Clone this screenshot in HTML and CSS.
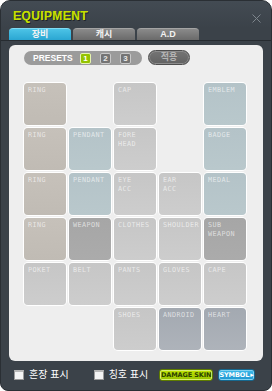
FILE: index.html
```html
<!DOCTYPE html>
<html>
<head>
<meta charset="utf-8">
<link rel="stylesheet" href="styles.css">
</head>
<body>
<div class="window">
  <div class="header">
    <span class="title">EQUIPMENT</span>
    <svg class="close" width="9" height="9" viewBox="0 0 9 9"><path d="M0.5 0.5L8.5 8.5M8.5 0.5L0.5 8.5" stroke="#7d858c" stroke-width="1"/></svg>
  </div>
  <div class="tabs">
    <div class="tab active">장비</div>
    <div class="tab">캐시</div>
    <div class="tab latin">A.D</div>
  </div>
  <div class="panel">
    <div class="presets-row">
      <div class="presets">
        <span class="presets-label">PRESETS</span>
        <span class="num on">1</span>
        <span class="num">2</span>
        <span class="num">3</span>
      </div>
      <div class="apply">적용</div>
    </div>
    <div class="grid">
      <div class="cell ring"><span>RING</span></div>
      <div class="cell empty"></div>
      <div class="cell gray"><span>CAP</span></div>
      <div class="cell empty"></div>
      <div class="cell blue"><span>EMBLEM</span></div>

      <div class="cell ring"><span>RING</span></div>
      <div class="cell blue"><span>PENDANT</span></div>
      <div class="cell gray"><span>FORE<br>HEAD</span></div>
      <div class="cell empty"></div>
      <div class="cell blue"><span>BADGE</span></div>

      <div class="cell ring"><span>RING</span></div>
      <div class="cell blue"><span>PENDANT</span></div>
      <div class="cell gray"><span>EYE<br>ACC</span></div>
      <div class="cell gray"><span>EAR<br>ACC</span></div>
      <div class="cell blue"><span>MEDAL</span></div>

      <div class="cell ring"><span>RING</span></div>
      <div class="cell dark"><span>WEAPON</span></div>
      <div class="cell gray"><span>CLOTHES</span></div>
      <div class="cell gray"><span>SHOULDER</span></div>
      <div class="cell dark"><span>SUB<br>WEAPON</span></div>

      <div class="cell gray"><span>POKET</span></div>
      <div class="cell gray"><span>BELT</span></div>
      <div class="cell gray"><span>PANTS</span></div>
      <div class="cell gray"><span>GLOVES</span></div>
      <div class="cell gray"><span>CAPE</span></div>

      <div class="cell empty"></div>
      <div class="cell empty"></div>
      <div class="cell gray"><span>SHOES</span></div>
      <div class="cell slate"><span>ANDROID</span></div>
      <div class="cell slate"><span>HEART</span></div>
    </div>
  </div>
  <div class="footer">
    <label class="check"><span class="box"></span><span class="check-text">혼장 표시</span></label>
    <label class="check"><span class="box"></span><span class="check-text">칭호 표시</span></label>
    <div class="btn dmg">DAMAGE SKIN</div>
    <div class="btn sym">SYMBOL<span class="tri">&#9656;</span></div>
  </div>
</div>
</body>
</html>
```

FILE: styles.css
```css
html, body {
  margin: 0;
  padding: 0;
  background: #ffffff;
}
.window {
  box-sizing: border-box;
  width: 272px;
  height: 391px;
  border: 1px solid #2a2f34;
  border-radius: 10px 10px 8px 8px;
  background: #3b4249;
  display: flex;
  flex-direction: column;
  font-family: "Liberation Sans", "Noto Sans CJK KR", sans-serif;
  overflow: hidden;
}
.header {
  height: 27px;
  box-sizing: border-box;
  padding: 9px 10px 0 12px;
  display: flex;
  justify-content: space-between;
  align-items: flex-start;
  background: linear-gradient(#434b53, #3b4249);
}
.title {
  font-size: 12px;
  line-height: 12px;
  font-weight: bold;
  color: #c6e000;
  letter-spacing: 0.4px;
  text-shadow: 1px 1px 0 #1e2328, 0.4px 0 0 #c6e000;
}
.close {
  margin-top: 4px;
}
.tabs {
  height: 13px;
  box-sizing: border-box;
  padding-left: 8px;
  display: flex;
  align-items: flex-end;
  gap: 2px;
  border-bottom: 1px solid #262b30;
}
.tab {
  width: 62px;
  height: 12px;
  box-sizing: border-box;
  border-radius: 4px 4px 0 0;
  background: linear-gradient(#8a8a8a, #6a6a6a);
  border-top: 1px solid #a4a4a4;
  color: #f2f2f2;
  font-size: 9px;
  line-height: 11px;
  text-align: center;
  font-weight: bold;
}
.tab.active {
  background: linear-gradient(#4cc3e6, #2aa6d2);
  border-top-color: #7fdcf5;
}
.tab.latin {
  font-size: 9px;
}
.panel {
  margin: 4px 0 0 8px;
  width: 254px;
  height: 316px;
  box-sizing: border-box;
  background: #eeeeee;
  border-radius: 6px;
  padding: 5px 0 0 15px;
}
.presets-row {
  display: flex;
  align-items: flex-start;
  gap: 6px;
  height: 15px;
}
.presets {
  margin-top: 1px;
  width: 118px;
  height: 14px;
  box-sizing: border-box;
  border-radius: 7px;
  background: #9b9b9b;
  display: flex;
  align-items: center;
  padding-left: 9px;
}
.presets-label {
  font-size: 8.5px;
  font-weight: bold;
  color: #ffffff;
  width: 47px;
}
.num {
  box-sizing: border-box;
  width: 11px;
  height: 11px;
  border-radius: 2px;
  border: 1px solid #c8c8c8;
  background: #747474;
  color: #e8e8e8;
  font-size: 8px;
  font-weight: bold;
  line-height: 9px;
  text-align: center;
  margin-right: 9px;
}
.num.on {
  background: #95c300;
  border-color: #e6f4b0;
  color: #ffffff;
}
.apply {
  width: 42px;
  height: 15px;
  box-sizing: border-box;
  border-radius: 8px;
  background: linear-gradient(#747474, #626262);
  border: 1px solid #4e4e4e;
  box-shadow: inset 0 0 0 1px #8c8c8c;
  color: #b4b4b4;
  font-size: 9px;
  line-height: 13px;
  text-align: center;
  font-weight: bold;
}
.grid {
  margin-top: 18px;
  display: grid;
  grid-template-columns: repeat(5, 42px);
  grid-auto-rows: 42px;
  gap: 3px;
}
.cell {
  border-radius: 4px;
  box-shadow: 0 0 0 1px #ffffff;
  box-sizing: border-box;
  padding: 4px 0 0 4px;
  font-family: "DejaVu Sans Mono", monospace;
  font-size: 6.8px;
  line-height: 9px;
  letter-spacing: 0.4px;
  color: rgba(255, 255, 255, 0.62);
  white-space: nowrap;
  overflow: hidden;
}
.cell span {
  display: block;
  margin-top: -1px;
}
.cell.empty {
  box-shadow: none;
  background: transparent;
}
.ring {
  background: linear-gradient(#c6c1ba, #c0bbb4);
}
.blue {
  background: linear-gradient(#b4c3c8, #b9c8cc);
}
.gray {
  background: linear-gradient(#c6c6c6, #cdcdcd);
}
.dark {
  background: linear-gradient(#a6a6a6, #ababab);
}
.slate {
  background: linear-gradient(#a3a9b1, #aeb3ba);
}
.footer {
  flex: 1;
  box-sizing: border-box;
  padding: 8px 16px 0 13px;
  display: flex;
  align-items: flex-start;
}
.check {
  width: 80px;
  display: flex;
  align-items: center;
  gap: 5px;
  height: 12px;
}
.box {
  width: 10px;
  height: 10px;
  box-sizing: border-box;
  background: #f4f4f4;
  border: 1px solid #9a9a9a;
  border-top: 2px solid #b8b8b8;
}
.check-text {
  color: #ffffff;
  font-size: 10px;
  line-height: 12px;
}
.btn {
  height: 12px;
  box-sizing: border-box;
  border-radius: 3px;
  font-family: "DejaVu Sans", sans-serif;
  font-weight: bold;
  font-size: 6.5px;
  line-height: 10px;
  text-align: center;
  letter-spacing: -0.1px;
}
.dmg {
  margin-left: -14px;
  width: 54px;
  background: linear-gradient(#c0e400, #98c400);
  border: 1px solid #5f7d00;
  color: #2c3f00;
  box-shadow: inset 0 0 0 1px #d8f070;
}
.sym {
  margin-left: 5px;
  width: 37px;
  background: linear-gradient(#3ab8ea, #1f95cf);
  border: 1px solid #16688f;
  color: #ffffff;
  box-shadow: inset 0 0 0 1px #7fd2f2;
}
.tri {
  font-size: 7px;
  margin-left: 1px;
}
```
